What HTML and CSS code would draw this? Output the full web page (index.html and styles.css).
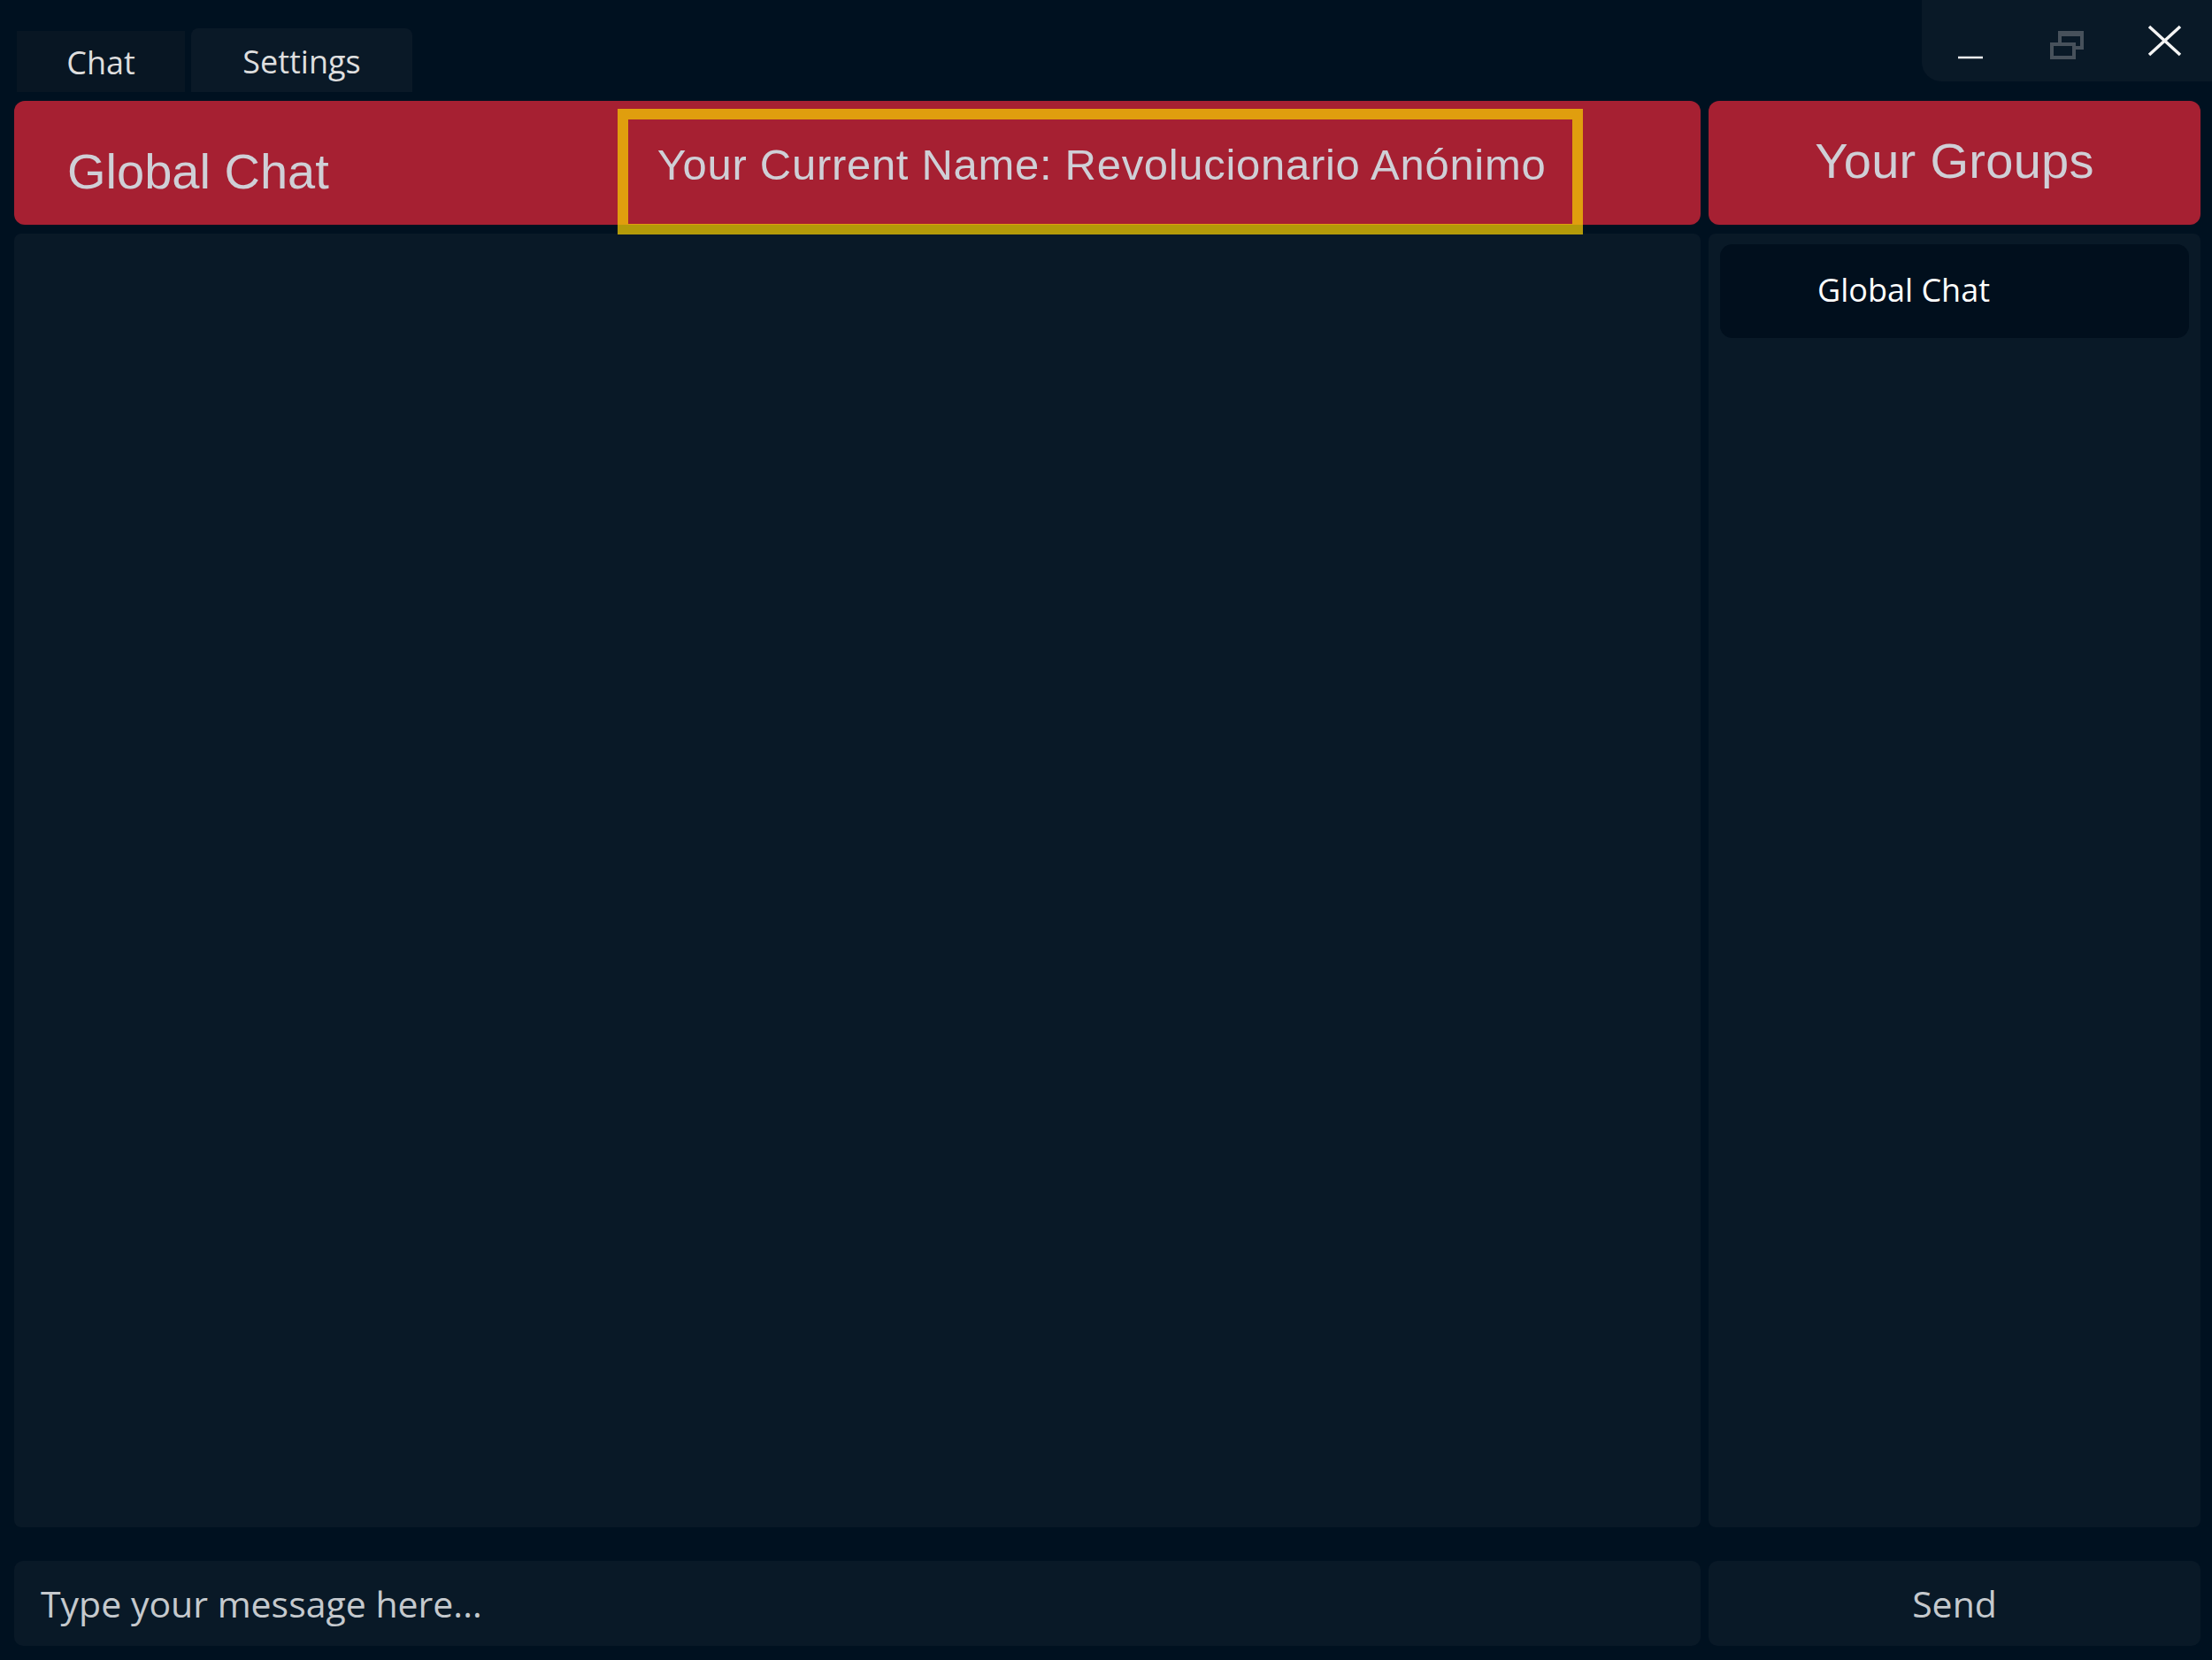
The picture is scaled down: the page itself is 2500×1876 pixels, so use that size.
FILE: index.html
```html
<!DOCTYPE html>
<html lang="es">
<head>
<meta charset="utf-8">
<title>Global Chat</title>
<link rel="stylesheet" href="styles.css">
</head>
<body>
<div class="window">
  <div class="topbar">
    <nav class="tabs">
      <div class="tab tab-chat">Chat</div>
      <div class="tab tab-settings">Settings</div>
    </nav>
    <div class="controls">
      <button class="ctl ctl-min" aria-label="Minimize">
        <svg width="110" height="92" viewBox="0 0 110 92"><line x1="41" y1="65" x2="69" y2="65" stroke="#f2f2f2" stroke-width="2.5"/></svg>
      </button>
      <button class="ctl ctl-restore" aria-label="Restore">
        <svg width="110" height="92" viewBox="0 0 110 92">
          <rect x="46" y="37" width="25" height="17" fill="none" stroke="#47515b" stroke-width="4"/>
          <rect x="46" y="36" width="25" height="5" fill="#47515b"/>
          <rect x="37" y="50" width="25" height="15" fill="#091927" stroke="#47515b" stroke-width="4"/>
        </svg>
      </button>
      <button class="ctl ctl-close" aria-label="Close">
        <svg width="108" height="92" viewBox="0 0 108 92"><path d="M37 30 L72 62 M72 30 L37 62" stroke="#f4f4f4" stroke-width="3.5" fill="none"/></svg>
      </button>
    </div>
  </div>

  <div class="header-row">
    <div class="chat-header">
      <h1 class="chat-title">Global Chat</h1>
      <div class="current-name">Your Current Name: Revolucionario Anónimo<span class="highlight"></span></div>
    </div>
    <div class="groups-header">
      <h2 class="groups-title">Your Groups</h2>
    </div>
  </div>

  <div class="main-row">
    <div class="chat-panel"></div>
    <div class="groups-panel">
      <div class="group-item">Global Chat</div>
    </div>
  </div>

  <div class="input-row">
    <div class="msg-input">Type your message here...</div>
    <div class="send-btn">Send</div>
  </div>
</div>
</body>
</html>
```

FILE: styles.css
```css
html, body {
  margin: 0;
  padding: 0;
}

body {
  background: #001120;
  width: 2500px;
  height: 1876px;
  overflow: hidden;
  font-family: "Open Sans", "Noto Sans", sans-serif;
}

.window {
  width: 2500px;
  height: 1876px;
  display: flex;
  flex-direction: column;
}

/* ---------- top bar ---------- */
.topbar {
  height: 114px;
  display: flex;
  justify-content: space-between;
  align-items: flex-start;
  flex-shrink: 0;
}

.tabs {
  height: 104px;
  display: flex;
  align-items: flex-end;
  gap: 7px;
  padding-left: 19px;
}

.tab {
  font-size: 36px;
  color: #dedede;
  text-align: center;
  box-sizing: border-box;
  padding-top: 3px;
}

.tab-chat {
  width: 190px;
  height: 69px;
  line-height: 66px;
  background: #081623;
}

.tab-settings {
  width: 250px;
  height: 72px;
  line-height: 69px;
  background: #0a1927;
  border-radius: 8px 8px 0 0;
}

.controls {
  width: 328px;
  height: 92px;
  display: flex;
  background: #091927;
  border-bottom-left-radius: 22px;
}

.ctl {
  width: 110px;
  height: 92px;
  padding: 0;
  margin: 0;
  border: 0;
  background: transparent;
  display: block;
}

.ctl svg {
  display: block;
}

.ctl-close {
  width: 108px;
}

/* ---------- header row ---------- */
.header-row,
.main-row,
.input-row {
  display: grid;
  grid-template-columns: 1906px 556px;
  column-gap: 9px;
  padding: 0 13px 0 16px;
  flex-shrink: 0;
}

.header-row {
  height: 140px;
}

.chat-header {
  background: #a62032;
  border-radius: 12px;
  display: flex;
  align-items: flex-start;
}

.chat-title {
  margin: 0;
  padding: 52px 0 0 60px;
  font-family: "Liberation Sans", Arial, sans-serif;
  font-weight: normal;
  font-size: 56px;
  line-height: 56px;
  color: #cfcfd6;
  white-space: nowrap;
}

.current-name {
  position: relative;
  margin-left: 371px;
  padding-top: 48px;
  font-family: "Liberation Sans", Arial, sans-serif;
  font-size: 49px;
  line-height: 49px;
  letter-spacing: 0.7px;
  color: #cfcfd6;
  white-space: nowrap;
}

.highlight {
  position: absolute;
  left: -45px;
  top: 9px;
  width: 1091px;
  height: 142px;
  box-sizing: border-box;
  border: 12px solid rgba(245, 206, 2, 0.73);
  pointer-events: none;
}

.groups-header {
  background: #a62032;
  border-radius: 12px;
  text-align: center;
}

.groups-title {
  margin: 0;
  padding-top: 40px;
  font-family: "Liberation Sans", Arial, sans-serif;
  font-weight: normal;
  font-size: 56px;
  line-height: 56px;
  letter-spacing: 0.3px;
  color: #cfcfd6;
}

/* ---------- main row ---------- */
.main-row {
  margin-top: 10px;
  height: 1462px;
}

.chat-panel {
  background: #091927;
  border-radius: 8px;
}

.groups-panel {
  background: #091927;
  border-radius: 8px;
  padding: 12px 13px;
}

.group-item {
  height: 106px;
  line-height: 104px;
  padding-left: 110px;
  background: #010f1d;
  border-radius: 14px;
  font-size: 36px;
  color: #ffffff;
}

/* ---------- input row ---------- */
.input-row {
  margin-top: 38px;
  height: 96px;
}

.msg-input,
.send-btn {
  background: #091927;
  border-radius: 10px;
  font-size: 41px;
  line-height: 96px;
  color: #c5c9cd;
}

.msg-input {
  padding-left: 30px;
}

.send-btn {
  text-align: center;
}
```
